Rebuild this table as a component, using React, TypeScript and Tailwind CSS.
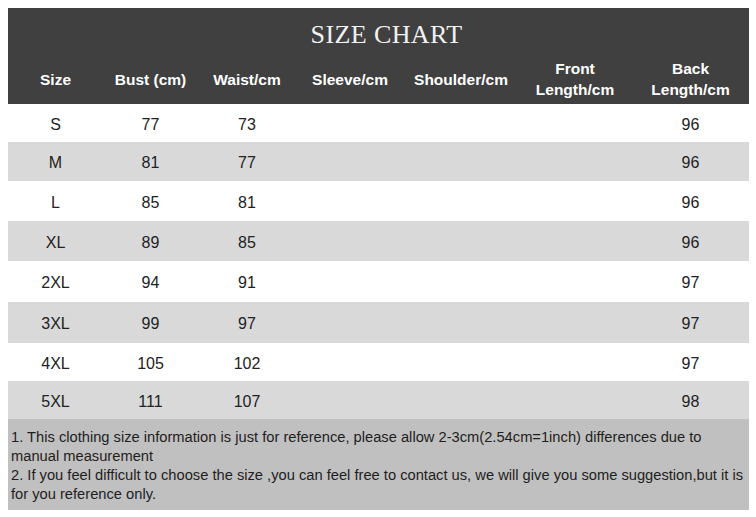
import React from 'react';

const columns = [
  { label: ['Size'], w: 'w-[95px]' },
  { label: ['Bust (cm)'], w: 'w-[95px]' },
  { label: ['Waist/cm'], w: 'w-[98px]' },
  { label: ['Sleeve/cm'], w: 'w-[108px]' },
  { label: ['Shoulder/cm'], w: 'w-[114px]' },
  { label: ['Front', 'Length/cm'], w: 'w-[114px]' },
  { label: ['Back', 'Length/cm'], w: 'flex-1' },
];

// size, bust, waist, sleeve, shoulder, front, back, row height
const rows: [string, string, string, string, string, string, string, string][] = [
  ['S', '77', '73', '', '', '', '96', 'h-[38px]'],
  ['M', '81', '77', '', '', '', '96', 'h-[39px]'],
  ['L', '85', '81', '', '', '', '96', 'h-[40px]'],
  ['XL', '89', '85', '', '', '', '96', 'h-[40px]'],
  ['2XL', '94', '91', '', '', '', '97', 'h-[41px]'],
  ['3XL', '99', '97', '', '', '', '97', 'h-[41px]'],
  ['4XL', '105', '102', '', '', '', '97', 'h-[38px]'],
  ['5XL', '111', '107', '', '', '', '98', 'h-[38px]'],
];

export default function App() {
  return (
    <div className="w-[756px] h-[517px] bg-white p-[8px] pr-[7px] font-['Liberation_Sans',Arial,sans-serif]">
      <div className="bg-[#404040]">
        <div className="h-[50px] flex items-center justify-center pt-[2px] pl-[16px]">
          <h1 className="font-['Liberation_Serif','Times_New_Roman',serif] text-[26px] tracking-[0.4px] text-[#f2f2f2]">
            SIZE CHART
          </h1>
        </div>
        <div className="h-[46px] flex text-white font-bold text-[15.5px] leading-[21px] pb-[4px]">
          {columns.map((c, i) => (
            <div key={i} className={`${c.w} flex flex-col items-center justify-center text-center`}>
              {c.label.map((l) => (
                <span key={l}>{l}</span>
              ))}
            </div>
          ))}
        </div>
      </div>

      {rows.map((r, i) => (
        <div
          key={r[0]}
          className={`${r[7]} flex items-center pt-[3px] text-[16px] text-[#222] ${i % 2 === 1 ? 'bg-[#d9d9d9]' : 'bg-white'}`}
        >
          {columns.map((c, j) => (
            <div key={j} className={`${c.w} text-center`}>
              {r[j]}
            </div>
          ))}
        </div>
      ))}

      <div className="h-[91px] bg-[#c0c0c0] px-[3px] pt-[9px] text-[14.7px] leading-[19px] text-[#1e1e1e] whitespace-nowrap">
        <p>
          1. This clothing size information is just for reference, please allow 2-3cm(2.54cm=1inch) differences due to
          <br />
          manual measurement
        </p>
        <p>
          2. If you feel difficult to choose the size ,you can feel free to contact us, we will give you some suggestion,but it is
          <br />
          for you reference only.
        </p>
      </div>
    </div>
  );
}
